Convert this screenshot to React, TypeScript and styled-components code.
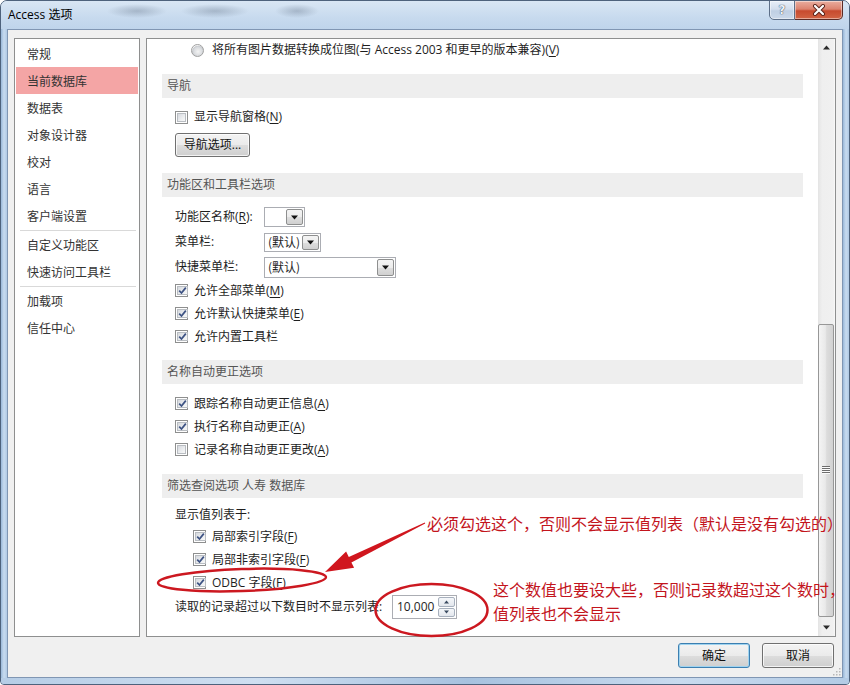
import React from "react";
import styled, { createGlobalStyle } from "styled-components";

const UI = `"Open Sans", "Noto Sans CJK SC", "Noto Sans", sans-serif`;
const NOTE = `"Noto Sans CJK SC", "Noto Sans", sans-serif`;

const GlobalStyle = createGlobalStyle`
  html, body { margin: 0; padding: 0; background: #ffffff; }
  #root { width: 850px; height: 685px; }
  *, *::before, *::after { box-sizing: border-box; }
`;

const Window = styled.div`
  position: relative;
  width: 850px;
  height: 685px;
  display: flex;
  flex-direction: column;
  border: 1px solid #4e627c;
  border-radius: 7px 7px 4px 4px;
  overflow: hidden;
  background: linear-gradient(180deg, #c9dbef 0%, #b9cfe8 100%);
  font-family: ${UI};
  font-size: 12px;
  color: #1b1b1b;
`;

const TitleBar = styled.div`
  height: 28px;
  flex: none;
  display: flex;
  justify-content: space-between;
  align-items: flex-start;
  background:
    radial-gradient(ellipse 30px 7px at 136px 10px, rgba(80, 96, 118, 0.32), transparent),
    radial-gradient(ellipse 34px 7px at 214px 10px, rgba(80, 96, 118, 0.32), transparent),
    radial-gradient(ellipse 22px 7px at 296px 10px, rgba(80, 96, 118, 0.32), transparent),
    linear-gradient(180deg, #d9e6f4 0%, #c7daee 60%, #bfd4eb 100%);
`;

const Title = styled.div`
  padding: 6px 0 0 7px;
  line-height: 16px;
  font-size: 12px;
  color: #000;
`;

const Caption = styled.div`
  display: flex;
  margin-right: 6px;
  margin-top: -1px;
`;

const CapButton = styled.div<{ $kind: "help" | "close" }>`
  height: 20px;
  width: ${(p) => (p.$kind === "close" ? 48 : 26)}px;
  display: flex;
  align-items: center;
  justify-content: center;
  border: 1px solid ${(p) => (p.$kind === "close" ? "#5b2b25" : "#5d6f88")};
  border-left-width: ${(p) => (p.$kind === "close" ? 0 : 1)}px;
  border-radius: ${(p) => (p.$kind === "close" ? "0 0 5px 0" : "0 0 0 5px")};
  background: ${(p) =>
    p.$kind === "close"
      ? "linear-gradient(180deg, #e9ad9f 0%, #dc836f 45%, #c74a2e 55%, #d26444 100%)"
      : "linear-gradient(180deg, #e8eff8 0%, #d3deed 45%, #bfcfe3 55%, #cbd9ea 100%)"};
  box-shadow: inset 0 0 0 1px rgba(255, 255, 255, 0.45);
  color: #eef2f7;
  font-family: "DejaVu Sans", sans-serif;
  font-weight: bold;
  font-size: 12px;
  text-shadow: 0 0 1px #3c4a5e, 0 0 1px #3c4a5e;
`;

const Middle = styled.div`
  flex: 1;
  display: flex;
`;

const SideFrame = styled.div`
  width: 6px;
  flex: none;
  background: linear-gradient(90deg, #9ab8d9 0%, #c8dbef 50%, #b0c9e4 100%);
`;

const BottomFrame = styled.div`
  height: 6px;
  flex: none;
  background: linear-gradient(90deg, #b6cde6 0%, #cfdff1 30%, #a7c2df 55%, #c9dbef 80%, #b3cbe5 100%);
`;

const Client = styled.div`
  position: relative;
  flex: 1;
  display: flex;
  flex-direction: column;
  border: 1px solid #8096b3;
  background: #f0f0f0;
  padding: 8px 6px 9px 6px;
`;

const Columns = styled.div`
  flex: 1;
  display: flex;
  gap: 6px;
  min-height: 0;
`;

const NavList = styled.div`
  width: 126px;
  flex: none;
  border: 1px solid #8e8f8f;
  background: #fff;
  padding-top: 1px;
  display: flex;
  flex-direction: column;
`;

const NavItem = styled.div<{ $active?: boolean }>`
  height: 27px;
  line-height: 27px;
  margin: 0 1px;
  padding: 1px 0 0 11px;
  color: #333;
  background: ${(p) => (p.$active ? "#f4a5a5" : "transparent")};
  white-space: nowrap;
`;

const NavSep = styled.div`
  height: 1px;
  margin: 1px 3px 0 5px;
  background: #d9d9d9;
  flex: none;
`;

const Panel = styled.div`
  flex: 1;
  display: flex;
  border: 1px solid #8e8f8f;
  background: #fff;
  min-width: 0;
`;

const Content = styled.div`
  flex: 1;
  padding: 0 15px;
  display: flex;
  flex-direction: column;
  overflow: hidden;
`;

const Row = styled.div<{ $h: number; $mt?: number; $indent?: number; $gap?: number }>`
  height: ${(p) => p.$h}px;
  margin-top: ${(p) => p.$mt ?? 0}px;
  padding-left: ${(p) => p.$indent ?? 13}px;
  display: flex;
  align-items: center;
  gap: ${(p) => p.$gap ?? 6}px;
  flex: none;
  white-space: nowrap;
  line-height: 16px;
  color: #1e1e1e;
`;

const SectionHeader = styled.div<{ $mt: number }>`
  margin-top: ${(p) => p.$mt}px;
  height: 24px;
  line-height: 24px;
  padding-left: 5px;
  background: #eeeeee;
  color: #555555;
  flex: none;
  white-space: nowrap;
`;

const Acc = styled.span`
  text-decoration: underline;
  text-underline-offset: 2px;
`;

const CheckBox = styled.span`
  width: 13px;
  height: 13px;
  flex: none;
  border: 1px solid #8e8f8f;
  background: #fff;
  padding: 1px;
  display: flex;
`;

const CheckInner = styled.span`
  flex: 1;
  border: 1px solid #b9bdc2;
  background: linear-gradient(135deg, #d6d9de 0%, #eceef0 60%, #f8f8f8 100%);
  display: flex;
  align-items: center;
  justify-content: center;
`;

const Radio = styled.span`
  width: 13px;
  height: 13px;
  flex: none;
  border-radius: 50%;
  border: 1px solid #a0a0a0;
  background: radial-gradient(circle at 55% 60%, #f4f4f4 0%, #dadcdf 45%, #c9ccd0 62%, #f6f6f6 70%);
`;

const LabelCell = styled.span<{ $w: number }>`
  width: ${(p) => p.$w}px;
  flex: none;
`;

const Combo = styled.div<{ $w: number; $h: number }>`
  width: ${(p) => p.$w}px;
  height: ${(p) => p.$h}px;
  border: 1px solid #abadb3;
  background: #fff;
  display: flex;
  align-items: stretch;
`;

const ComboText = styled.span`
  flex: 1;
  padding-left: 3px;
  display: flex;
  align-items: center;
  color: #1e1e1e;
  font-family: ${NOTE};
`;

const ComboBtn = styled.span`
  width: 17px;
  flex: none;
  margin: 1px;
  border: 1px solid #8e8f8f;
  border-radius: 2px;
  background: linear-gradient(180deg, #f4f4f4 0%, #ececec 50%, #dedede 51%, #d0d0d0 100%);
  display: flex;
  align-items: center;
  justify-content: center;
`;

const PushButton = styled.button<{ $w: number; $h: number; $default?: boolean }>`
  width: ${(p) => p.$w}px;
  height: ${(p) => p.$h}px;
  padding: 0;
  border: 1px solid ${(p) => (p.$default ? "#3c7fb1" : "#707070")};
  border-radius: 3px;
  background: linear-gradient(180deg, #f3f3f3 0%, #ebebeb 50%, #dddddd 51%, #cfcfcf 100%);
  box-shadow: inset 0 0 0 1px ${(p) => (p.$default ? "#9fd3ef" : "rgba(255,255,255,0.75)")};
  font-family: ${UI};
  font-size: 12px;
  color: #111;
  line-height: 16px;
  flex: none;
`;

const SpinBox = styled.div`
  width: 65px;
  height: 24px;
  border: 1px solid #abadb3;
  background: #fff;
  display: flex;
  align-items: stretch;
`;

const SpinText = styled.span`
  flex: 1;
  padding-left: 4px;
  display: flex;
  align-items: center;
  color: #1e1e1e;
`;

const SpinBtns = styled.span`
  width: 17px;
  flex: none;
  margin: 1px;
  display: flex;
  flex-direction: column;
  gap: 1px;
`;

const SpinBtn = styled.span`
  flex: 1;
  border: 1px solid #a7b0bd;
  border-radius: 2px;
  background: linear-gradient(180deg, #f5f7fa 0%, #e3e7ed 100%);
  display: flex;
  align-items: center;
  justify-content: center;
`;

const ScrollBar = styled.div`
  width: 17px;
  flex: none;
  display: flex;
  flex-direction: column;
  background: linear-gradient(90deg, #e4e4e4 0%, #efefef 25%, #f0f0f0 90%, #fafafa 100%);
`;

const ScrollArrow = styled.div`
  height: 17px;
  flex: none;
  display: flex;
  align-items: center;
  justify-content: center;
`;

const Track = styled.div`
  flex: 1;
  display: flex;
  flex-direction: column;
`;

const Thumb = styled.div<{ $top: number; $h: number }>`
  margin: ${(p) => p.$top}px 1px 0 0;
  height: ${(p) => p.$h}px;
  border: 1px solid #979797;
  border-radius: 2px;
  background: linear-gradient(90deg, #f4f4f4 0%, #e9e9e9 45%, #dcdcdc 55%, #d2d2d2 100%);
  display: flex;
  align-items: center;
  justify-content: center;
`;

const Footer = styled.div`
  height: 25px;
  margin-top: 6px;
  padding-right: 2px;
  display: flex;
  justify-content: flex-end;
  gap: 12px;
  flex: none;
`;

const Grip = styled.svg`
  position: absolute;
  right: 1px;
  bottom: 1px;
`;

const Overlay = styled.svg`
  position: absolute;
  left: -1px;
  top: -1px;
  pointer-events: none;
`;

const Note = styled.div<{ $x: number; $y: number }>`
  position: absolute;
  left: ${(p) => p.$x - 1}px;
  top: ${(p) => p.$y - 1}px;
  height: 20px;
  font-family: ${NOTE};
  font-size: 16px;
  line-height: 20px;
  color: #c3151d;
  white-space: nowrap;
`;

const Tri: React.FC<{ dir?: "up" | "down"; size?: number; color?: string }> = ({
  dir = "down",
  size = 7,
  color = "#111",
}) => (
  <svg width={size} height={Math.ceil(size / 2) + 1} viewBox="0 0 7 4">
    {dir === "down" ? <path d="M0 0 H7 L3.5 4 Z" fill={color} /> : <path d="M0 4 H7 L3.5 0 Z" fill={color} />}
  </svg>
);

const Check: React.FC<{ on?: boolean }> = ({ on }) => (
  <CheckBox>
    <CheckInner>
      {on && (
        <svg width="9" height="9" viewBox="0 0 9 9">
          <path d="M1.2 4.6 L3.5 7 L7.8 1.6" fill="none" stroke="#3d5283" strokeWidth="1.7" />
        </svg>
      )}
    </CheckInner>
  </CheckBox>
);

const navTop = ["常规", "当前数据库", "数据表", "对象设计器", "校对", "语言", "客户端设置"];
const navMid = ["自定义功能区", "快速访问工具栏"];
const navBottom = ["加载项", "信任中心"];

export default function App() {
  return (
    <>
      <GlobalStyle />
      <Window>
        <TitleBar>
          <Title>Access 选项</Title>
          <Caption>
            <CapButton $kind="help">?</CapButton>
            <CapButton $kind="close">
              <svg width="14" height="12" viewBox="0 0 14 12">
                <path d="M3 2 L11 10 M11 2 L3 10" stroke="#5a2219" strokeWidth="4" strokeLinecap="round" />
                <path d="M3 2 L11 10 M11 2 L3 10" stroke="#ffffff" strokeWidth="2.2" strokeLinecap="round" />
              </svg>
            </CapButton>
          </Caption>
        </TitleBar>
        <Middle>
          <SideFrame />
          <Client>
            <Columns>
              <NavList>
                {navTop.map((t) => (
                  <NavItem key={t} $active={t === "当前数据库"}>
                    {t}
                  </NavItem>
                ))}
                <NavSep />
                {navMid.map((t) => (
                  <NavItem key={t}>{t}</NavItem>
                ))}
                <NavSep />
                {navBottom.map((t) => (
                  <NavItem key={t}>{t}</NavItem>
                ))}
              </NavList>
              <Panel>
                <Content>
                  <Row $h={22} $indent={29} $gap={8}>
                    <Radio />
                    <span>
                      将所有图片数据转换成位图(与 Access 2003 和更早的版本兼容)(<Acc>V</Acc>)
                    </span>
                  </Row>

                  <SectionHeader $mt={13}>导航</SectionHeader>
                  <Row $h={22} $mt={8}>
                    <Check />
                    <span>
                      显示导航窗格(<Acc>N</Acc>)
                    </span>
                  </Row>
                  <Row $h={24} $mt={5}>
                    <PushButton $w={75} $h={24}>导航选项...</PushButton>
                  </Row>

                  <SectionHeader $mt={16}>功能区和工具栏选项</SectionHeader>
                  <Row $h={20} $mt={10} $gap={0}>
                    <LabelCell $w={89}>
                      功能区名称(<Acc>R</Acc>):
                    </LabelCell>
                    <Combo $w={41} $h={20}>
                      <ComboText />
                      <ComboBtn>
                        <Tri />
                      </ComboBtn>
                    </Combo>
                  </Row>
                  <Row $h={20} $mt={5} $gap={0}>
                    <LabelCell $w={89}>菜单栏:</LabelCell>
                    <Combo $w={57} $h={19}>
                      <ComboText>(默认)</ComboText>
                      <ComboBtn>
                        <Tri />
                      </ComboBtn>
                    </Combo>
                  </Row>
                  <Row $h={20} $mt={5} $gap={0}>
                    <LabelCell $w={89}>快捷菜单栏:</LabelCell>
                    <Combo $w={132} $h={21}>
                      <ComboText>(默认)</ComboText>
                      <ComboBtn>
                        <Tri />
                      </ComboBtn>
                    </Combo>
                  </Row>
                  <Row $h={23} $mt={2}>
                    <Check on />
                    <span>
                      允许全部菜单(<Acc>M</Acc>)
                    </span>
                  </Row>
                  <Row $h={23}>
                    <Check on />
                    <span>
                      允许默认快捷菜单(<Acc>E</Acc>)
                    </span>
                  </Row>
                  <Row $h={23}>
                    <Check on />
                    <span>允许内置工具栏</span>
                  </Row>

                  <SectionHeader $mt={12}>名称自动更正选项</SectionHeader>
                  <Row $h={23} $mt={8}>
                    <Check on />
                    <span>
                      跟踪名称自动更正信息(<Acc>A</Acc>)
                    </span>
                  </Row>
                  <Row $h={23}>
                    <Check on />
                    <span>
                      执行名称自动更正(<Acc>A</Acc>)
                    </span>
                  </Row>
                  <Row $h={23}>
                    <Check />
                    <span>
                      记录名称自动更正更改(<Acc>A</Acc>)
                    </span>
                  </Row>

                  <SectionHeader $mt={13}>筛选查阅选项 人寿 数据库</SectionHeader>
                  <Row $h={20} $mt={7}>
                    <span>显示值列表于:</span>
                  </Row>
                  <Row $h={23} $indent={31}>
                    <Check on />
                    <span>
                      局部索引字段(<Acc>F</Acc>)
                    </span>
                  </Row>
                  <Row $h={23} $indent={31}>
                    <Check on />
                    <span>
                      局部非索引字段(<Acc>F</Acc>)
                    </span>
                  </Row>
                  <Row $h={23} $indent={31}>
                    <Check on />
                    <span>
                      ODBC 字段(<Acc>F</Acc>)
                    </span>
                  </Row>
                  <Row $h={24} $mt={1} $gap={0}>
                    <LabelCell $w={217}>读取的记录超过以下数目时不显示列表:</LabelCell>
                    <SpinBox>
                      <SpinText>10,000</SpinText>
                      <SpinBtns>
                        <SpinBtn>
                          <Tri dir="up" size={5} color="#3a4a60" />
                        </SpinBtn>
                        <SpinBtn>
                          <Tri dir="down" size={5} color="#3a4a60" />
                        </SpinBtn>
                      </SpinBtns>
                    </SpinBox>
                  </Row>
                </Content>
                <ScrollBar>
                  <ScrollArrow>
                    <Tri dir="up" size={7} color="#2b2b2b" />
                  </ScrollArrow>
                  <Track>
                    <Thumb $top={268} $h={293}>
                      <svg width="8" height="9" viewBox="0 0 8 9">
                        <path d="M0 0.5 H8 M0 2.5 H8 M0 4.5 H8 M0 6.5 H8" stroke="#6e6e6e" strokeWidth="1" />
                        <path d="M0 1.5 H8 M0 3.5 H8 M0 5.5 H8 M0 7.5 H8" stroke="#fbfbfb" strokeWidth="1" />
                      </svg>
                    </Thumb>
                  </Track>
                  <ScrollArrow>
                    <Tri dir="down" size={7} color="#2b2b2b" />
                  </ScrollArrow>
                </ScrollBar>
              </Panel>
            </Columns>
            <Footer>
              <PushButton $w={72} $h={25} $default>
                确定
              </PushButton>
              <PushButton $w={72} $h={25}>
                取消
              </PushButton>
            </Footer>
            <Grip width="8" height="8" viewBox="0 0 8 8">
              <g fill="#b8b8b8">
                <rect x="6" y="0" width="1.5" height="1.5" />
                <rect x="3" y="3" width="1.5" height="1.5" />
                <rect x="6" y="3" width="1.5" height="1.5" />
                <rect x="0" y="6" width="1.5" height="1.5" />
                <rect x="3" y="6" width="1.5" height="1.5" />
                <rect x="6" y="6" width="1.5" height="1.5" />
              </g>
            </Grip>
          </Client>
          <SideFrame />
        </Middle>
        <BottomFrame />

        <Overlay width="850" height="685" viewBox="0 0 850 685">
          <ellipse
            cx="242"
            cy="580"
            rx="84"
            ry="11"
            fill="none"
            stroke="#cc1820"
            strokeWidth="2.5"
            transform="rotate(-2 242 580)"
          />
          <ellipse cx="431.5" cy="610" rx="56" ry="26" fill="none" stroke="#cc1820" strokeWidth="2.5" />
          <polygon
            points="325,572 354.1,567.8 351.4,562.4 425.2,523.4 424.8,522.6 348.8,557 346.1,551.6"
            fill="#d0161e"
          />
        </Overlay>
        <Note $x={427} $y={513}>必须勾选这个，否则不会显示值列表（默认是没有勾选的）</Note>
        <Note $x={493} $y={579}>这个数值也要设大些，否则记录数超过这个数时，</Note>
        <Note $x={493} $y={603}>值列表也不会显示</Note>
      </Window>
    </>
  );
}
